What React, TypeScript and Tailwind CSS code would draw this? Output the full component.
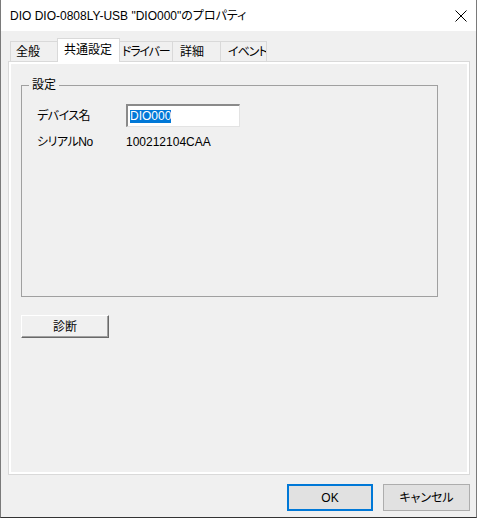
import React from 'react';

const jp = "font-['Liberation_Sans','Noto_Sans_CJK_JP',sans-serif] [font-feature-settings:'palt']";

const tabs = [
  { label: '全般', w: 'w-[48px]', pl: 'pl-[5px]', tr: '', active: false },
  { label: '共通設定', w: 'w-[63px]', pl: 'pl-[6px]', tr: '', active: true },
  { label: 'ドライバー', w: 'w-[54px]', pl: 'pl-[2px]', tr: 'tracking-[-1.2px]', active: false },
  { label: '詳細', w: 'w-[49px]', pl: 'pl-[7px]', tr: '', active: false },
  { label: 'イベント', w: 'w-[47px]', pl: 'pl-[7px]', tr: 'tracking-[-1px]', active: false },
];

function Tab({ label, w, pl, tr, active }: { label: string; w: string; pl: string; tr: string; active: boolean }) {
  if (active) {
    return (
      <div className={`relative z-10 -ml-px -mb-px h-[24px] ${w} ${pl} pt-[4px] bg-white border border-b-0 border-[#d9d9d9] leading-[14px] whitespace-nowrap`}>
        {label}
      </div>
    );
  }
  return (
    <div className={`-ml-px first:ml-0 h-[20px] ${w} ${pl} ${tr} pt-[3px] bg-[#f0f0f0] border border-b-0 border-[#d9d9d9] leading-[14px] whitespace-nowrap overflow-hidden`}>
      {label}
    </div>
  );
}

export default function App() {
  return (
    <div className={`w-[477px] h-[518px] flex flex-col bg-[#f0f0f0] border-l border-r border-b border-l-[#7a7a7a] border-r-[#7a7a7a] border-b-[#333333] text-[12px] text-black ${jp}`}>
      {/* title bar */}
      <div className="h-[31px] shrink-0 bg-white flex items-center pl-[9px]">
        <span className="leading-[14px] whitespace-nowrap">DIO DIO-0808LY-USB "DIO000"のプロパティ</span>
        <svg className="ml-auto mr-[9px]" width="12" height="12" viewBox="0 0 12 12">
          <path d="M0.5 0.5 L11.5 11.5 M11.5 0.5 L0.5 11.5" stroke="#000" strokeWidth="1" fill="none" />
        </svg>
      </div>

      <div className="flex flex-col pl-[7px]">
        {/* tabs */}
        <div className="mt-[7px] h-[23px] ml-[2px] flex items-end">
          {tabs.map((t) => (
            <Tab key={t.label} {...t} />
          ))}
        </div>

        {/* tab page */}
        <div className="w-[462px] h-[414px] border border-[#d9d9d9]">
          <div className="h-full border-2 border-white flex flex-col">
            <fieldset className="ml-[10px] mt-[14px] w-[417px] h-[219px] border border-[#a0a0a0] pl-[15px]">
              <legend className="ml-[-8px] px-[3px] leading-[14px]">設定</legend>
              <div className="mt-[12px] h-[23px] flex items-center">
                <span className="w-[89px] leading-[14px] tracking-[-0.5px]">デバイス名</span>
                <div className="w-[114px] h-[23px] bg-white border-t-2 border-l-2 border-r border-b border-t-[#8a8a8a] border-l-[#8a8a8a] border-r-[#e3e3e3] border-b-[#e3e3e3] pl-[2px] flex items-center">
                  <span className="bg-[#0078d7] text-white leading-[13px]">DIO000</span>
                </div>
              </div>
              <div className="mt-[7px] h-[16px] flex items-center">
                <span className="w-[89px] leading-[14px] tracking-[-0.5px]">シリアルNo</span>
                <span className="leading-[14px]">100212104CAA</span>
              </div>
            </fieldset>

            <button className="ml-[10px] mt-[18px] w-[88px] h-[23px] bg-[#f0f0f0] border-t border-l border-r border-b border-t-white border-l-white border-r-[#696969] border-b-[#696969] shadow-[inset_-1px_-1px_0_#a0a0a0] flex items-center justify-center leading-[14px]">
              診断
            </button>
          </div>
        </div>

        {/* dialog buttons */}
        <div className="w-[462px] mt-[9px] flex justify-end gap-[10px]">
          <button className="w-[86px] h-[27px] bg-[#e1e1e1] border-2 border-[#0078d7] flex items-center justify-center leading-[14px]">
            OK
          </button>
          <button className="w-[87px] h-[27px] bg-[#e1e1e1] border border-[#adadad] flex items-center justify-center leading-[14px]">
            キャンセル
          </button>
        </div>
      </div>
    </div>
  );
}
